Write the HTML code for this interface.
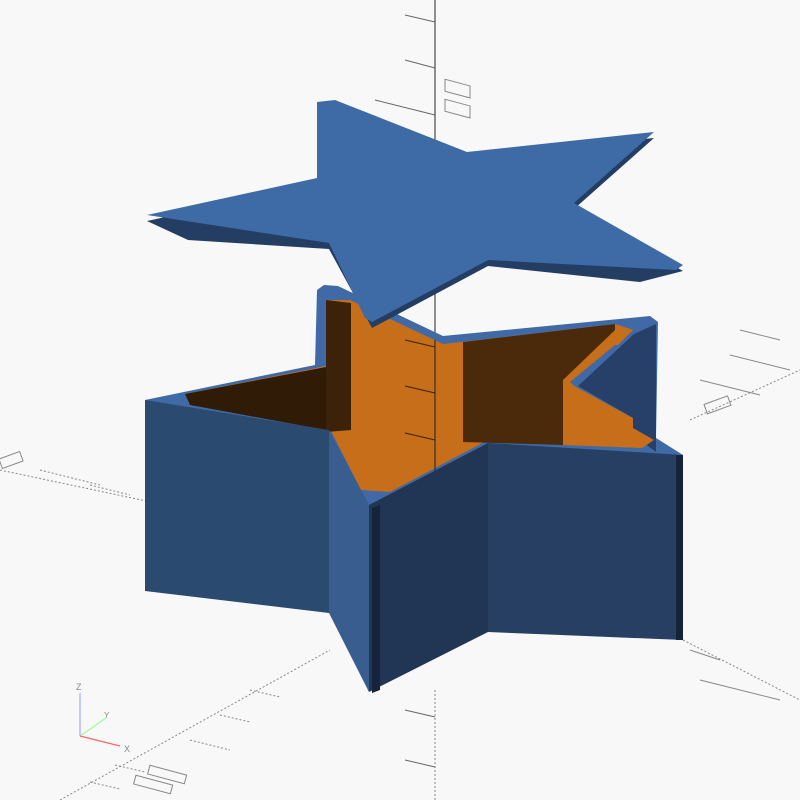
<!DOCTYPE html>
<html><head><meta charset="utf-8"><style>html,body{margin:0;padding:0;background:#f8f8f8;width:800px;height:800px;overflow:hidden}</style></head>
<body>
<svg width="800" height="800" viewBox="0 0 800 800" xmlns="http://www.w3.org/2000/svg" font-family="Liberation Sans, sans-serif">
<rect width="800" height="800" fill="#f8f8f8"/>
<g stroke="#888" stroke-width="1" fill="none">
<line x1="435" y1="0" x2="435" y2="340" stroke="#222"/>
<line x1="435" y1="690" x2="435" y2="800" stroke-dasharray="2,2"/>
<line x1="0" y1="470" x2="330" y2="540" stroke-dasharray="2,2"/>
<line x1="60" y1="800" x2="330" y2="650" stroke-dasharray="2,2"/>
<line x1="690" y1="420" x2="800" y2="370" stroke-dasharray="2,2"/>
<line x1="683" y1="640" x2="800" y2="700" stroke-dasharray="2,2"/>
<line x1="405" y1="15" x2="435" y2="22" stroke="#666"/>
<line x1="405" y1="60" x2="435" y2="68" stroke="#666"/>
<line x1="375" y1="100" x2="435" y2="115" stroke="#666"/>
<line x1="405" y1="155" x2="435" y2="162" stroke="#666"/>
<line x1="405" y1="200" x2="435" y2="207" stroke="#666"/>
<line x1="405" y1="710" x2="435" y2="717" stroke="#666"/>
<line x1="405" y1="760" x2="435" y2="767" stroke="#666"/>
<line x1="740" y1="330" x2="780" y2="340"/>
<line x1="730" y1="355" x2="790" y2="370"/>
<line x1="700" y1="380" x2="760" y2="395"/>
<line x1="690" y1="650" x2="720" y2="660"/>
<line x1="700" y1="680" x2="780" y2="700"/>
<line x1="90" y1="485" x2="130" y2="495" stroke-dasharray="2,2"/>
<line x1="40" y1="470" x2="100" y2="485" stroke-dasharray="2,2"/>
<line x1="180" y1="500" x2="220" y2="510" stroke-dasharray="2,2"/>
<line x1="190" y1="740" x2="230" y2="750" stroke-dasharray="2,2"/>
<line x1="220" y1="715" x2="250" y2="722" stroke-dasharray="2,2"/>
<line x1="250" y1="690" x2="280" y2="697" stroke-dasharray="2,2"/>
<line x1="115" y1="765" x2="145" y2="772" stroke-dasharray="2,2"/>
<line x1="90" y1="782" x2="120" y2="789" stroke-dasharray="2,2"/>
<rect x="445" y="80" width="25" height="12" transform="skewY(15) translate(0,-120)"/>
<rect x="445" y="100" width="25" height="12" transform="skewY(15) translate(0,-120)"/>
<rect x="705" y="400" width="25" height="10" transform="rotate(-20 717 405)"/>
<rect x="148" y="770" width="38" height="9" transform="rotate(15 167 775)"/>
<rect x="134" y="780" width="38" height="9" transform="rotate(15 153 785)"/>
<rect x="0" y="455" width="22" height="10" transform="rotate(-20 11 460)"/>
</g>
<line x1="80" y1="736" x2="80" y2="693" stroke="#aab0ff" stroke-width="1.3"/>
<line x1="80" y1="736" x2="106" y2="718" stroke="#9f9" stroke-width="1.3"/>
<line x1="80" y1="736" x2="120" y2="746" stroke="#f66" stroke-width="1.3"/>
<text x="76" y="690" font-size="9" fill="#888">Z</text>
<text x="104" y="718" font-size="8" fill="#888">Y</text>
<text x="124" y="752" font-size="9" fill="#888">X</text>

<polygon points="145,400 315,365 317,290 324,285 338,286 443,336 650,316 658,322 656,438 683,455 488,447 372,507 362,503 329,430 147,405" fill="#3f6aa6"/>
<polygon points="185,394 326,366 326,300 350,300 443,344 615,324 633,330 570,382 642,448 488,440 390,492 361,490 329,427 190,405" fill="#c66e1a"/>
<polygon points="185,394 326,367 326,430 190,405" fill="#301b06"/>
<polygon points="326,300 351,303 351,430 326,432" fill="#3b2208"/>
<polygon points="463,342 615,324 615,330 563,380 563,445 463,442" fill="#4a2a0a"/>
<polygon points="615,324 633,330 618,345 615,345" fill="#c66e1a"/>
<line x1="435" y1="340" x2="435" y2="480" stroke="#222" stroke-width="1"/>
<g stroke="#3a2008" stroke-width="1"><line x1="405" y1="340" x2="435" y2="347"/><line x1="405" y1="386" x2="435" y2="393"/><line x1="405" y1="433" x2="435" y2="440"/></g>
<polygon points="656,324 656,452 648,446 633,428 633,418 578,386 634,334" fill="#27406a"/>
<polygon points="563,380 633,418 633,428 654,440 642,448 563,445" fill="#c66e1a"/>
<polygon points="145,400 329,430 329,613 145,591" fill="#2b4a70"/>
<polygon points="329,430 369,505 369,692 329,613" fill="#385d8e"/>
<polygon points="369,505 488,443 488,632 369,692" fill="#213654"/>
<polygon points="372,508 380,505 380,690 372,693" fill="#15243a"/>
<polygon points="488,443 683,455 683,640 488,632" fill="#263f62"/>
<polygon points="676,455 683,455 683,640 676,640" fill="#15243a"/>
<polygon points="317,108 335,106 467,158 654,138 574,209 683,271 640,282 488,266 372,328 329,249 188,240 147,221 317,184" fill="#243d62"/>
<polygon points="317,102 335,100 467,152 654,132 574,203 683,265 676,270 488,260 372,322 365,318 329,243 147,215 317,178" fill="#3e6ba6"/>
</svg>
</body></html>
